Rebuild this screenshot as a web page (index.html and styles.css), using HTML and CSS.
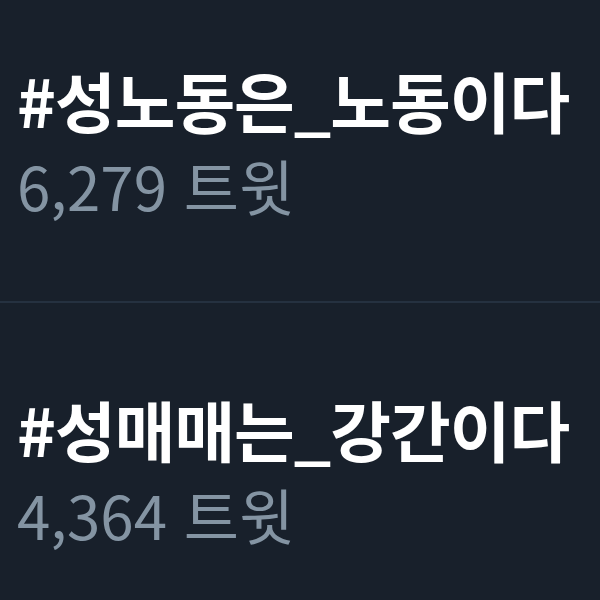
FILE: index.html
```html
<!DOCTYPE html>
<html lang="ko">
<head>
    <meta charset="UTF-8">
    <meta name="viewport" content="width=device-width, initial-scale=1.0">
    <title>트렌드</title>
    <link rel="stylesheet" href="styles.css">
</head>
<body>
    <div class="trend-list">
        <div class="trend trend-first">
            <div class="trend-name">#성노동은_노동이다</div>
            <div class="trend-count">6,279 트윗</div>
        </div>
        <div class="trend">
            <div class="trend-name">#성매매는_강간이다</div>
            <div class="trend-count">4,364 트윗</div>
        </div>
    </div>
</body>
</html>
```

FILE: styles.css
```css
body {
    margin: 0;
    background-color: #18202b;
    font-family: "Noto Sans CJK KR", "Noto Sans", sans-serif;
    overflow: hidden;
}

.trend-list {
    display: flex;
    flex-direction: column;
}

.trend {
    padding: 92px 0 86px 17px;
    border-bottom: 2px solid #253140;
}

.trend-first {
    padding-top: 66px;
}

.trend:last-child {
    padding-bottom: 20px;
    border-bottom: none;
}

.trend-name {
    font-size: 66px;
    font-weight: 700;
    line-height: 1;
    letter-spacing: -1px;
    color: #ffffff;
}

.trend-count {
    margin-top: 23px;
    font-size: 60px;
    line-height: 1;
    color: #8494a3;
}
```
